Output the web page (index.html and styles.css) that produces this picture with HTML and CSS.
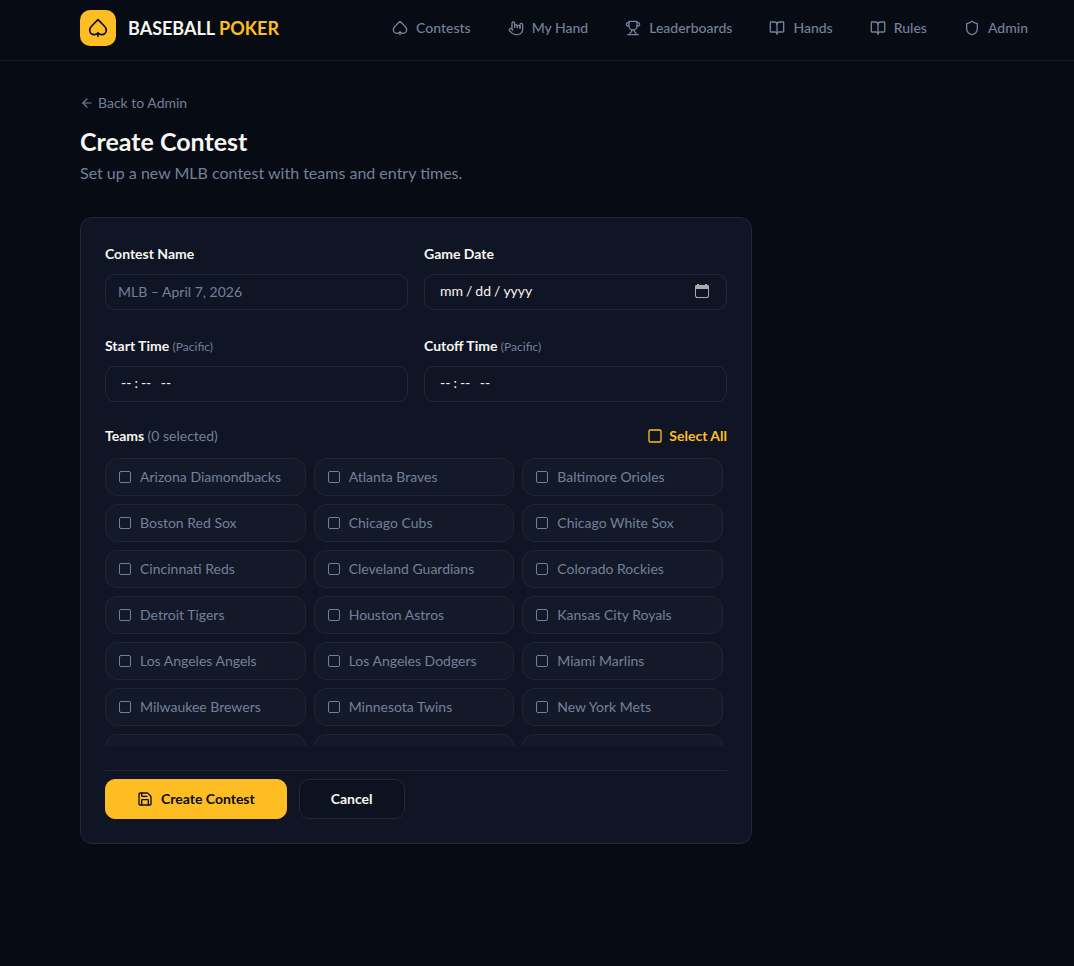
FILE: index.html
```html
<!DOCTYPE html>
<html lang="en">
<head>
    <meta charset="UTF-8">
    <meta name="viewport" content="width=device-width, initial-scale=1.0">
    <title>Create Contest - Baseball Poker</title>
    <link rel="stylesheet" href="styles.css">
</head>
<body>
    <header class="site-header">
        <a href="#" class="brand">
            <span class="brand-mark">
                <svg class="icon icon-lg" viewBox="0 0 24 24"><path d="M5 9c-1.5 1.5-3 3.2-3 5.5A5.5 5.5 0 0 0 7.5 20c1.8 0 3-.5 4.5-2 1.5 1.5 2.7 2 4.5 2a5.5 5.5 0 0 0 5.5-5.5c0-2.3-1.5-4-3-5.5l-7-7-7 7Z"/><path d="M12 18v4"/></svg>
            </span>
            <span class="brand-name">BASEBALL <span class="accent">POKER</span></span>
        </a>
        <nav class="main-nav">
            <a href="#contests">
                <svg class="icon" viewBox="0 0 24 24"><path d="M5 9c-1.5 1.5-3 3.2-3 5.5A5.5 5.5 0 0 0 7.5 20c1.8 0 3-.5 4.5-2 1.5 1.5 2.7 2 4.5 2a5.5 5.5 0 0 0 5.5-5.5c0-2.3-1.5-4-3-5.5l-7-7-7 7Z"/><path d="M12 18v4"/></svg>
                Contests
            </a>
            <a href="#my-hand">
                <svg class="icon" viewBox="0 0 24 24"><path d="M18 12.5V10a2 2 0 0 0-2-2a2 2 0 0 0-2 2v1.4"/><path d="M14 11V9a2 2 0 1 0-4 0v2"/><path d="M10 10.5V5a2 2 0 1 0-4 0v9"/><path d="m7 15-1.76-1.76a2 2 0 0 0-2.83 2.82l3.6 3.6C7.5 21.14 9.2 22 12 22h2a8 8 0 0 0 8-8V7a2 2 0 1 0-4 0v5"/></svg>
                My Hand
            </a>
            <a href="#leaderboards">
                <svg class="icon" viewBox="0 0 24 24"><path d="M6 9H4.5a2.5 2.5 0 0 1 0-5H6"/><path d="M18 9h1.5a2.5 2.5 0 0 0 0-5H18"/><path d="M4 22h16"/><path d="M10 14.66V17c0 .55-.47.98-.97 1.21C7.85 18.75 7 20.24 7 22"/><path d="M14 14.66V17c0 .55.47.98.97 1.21C16.15 18.75 17 20.24 17 22"/><path d="M18 2H6v7a6 6 0 0 0 12 0V2Z"/></svg>
                Leaderboards
            </a>
            <a href="#hands">
                <svg class="icon" viewBox="0 0 24 24"><path d="M12 7v14"/><path d="M3 18a1 1 0 0 1-1-1V4a1 1 0 0 1 1-1h5a4 4 0 0 1 4 4 4 4 0 0 1 4-4h5a1 1 0 0 1 1 1v13a1 1 0 0 1-1 1h-6a3 3 0 0 0-3 3 3 3 0 0 0-3-3z"/></svg>
                Hands
            </a>
            <a href="#rules">
                <svg class="icon" viewBox="0 0 24 24"><path d="M12 7v14"/><path d="M3 18a1 1 0 0 1-1-1V4a1 1 0 0 1 1-1h5a4 4 0 0 1 4 4 4 4 0 0 1 4-4h5a1 1 0 0 1 1 1v13a1 1 0 0 1-1 1h-6a3 3 0 0 0-3 3 3 3 0 0 0-3-3z"/></svg>
                Rules
            </a>
            <a href="#admin">
                <svg class="icon" viewBox="0 0 24 24"><path d="M20 13c0 5-3.5 7.5-7.66 8.95a1 1 0 0 1-.67-.01C7.5 20.5 4 18 4 13V6a1 1 0 0 1 1-1c2 0 4.5-1.2 6.24-2.72a1.17 1.17 0 0 1 1.52 0C14.51 3.81 17 5 19 5a1 1 0 0 1 1 1z"/></svg>
                Admin
            </a>
        </nav>
    </header>

    <main class="page">
        <a href="#admin" class="back-link">
            <svg class="icon icon-sm" viewBox="0 0 24 24"><path d="m12 19-7-7 7-7"/><path d="M19 12H5"/></svg>
            Back to Admin
        </a>
        <h1>Create Contest</h1>
        <p class="subtitle">Set up a new MLB contest with teams and entry times.</p>

        <form class="card">
            <div class="fields">
                <div class="field">
                    <label for="name">Contest Name</label>
                    <input type="text" id="name" placeholder="MLB – April 7, 2026">
                </div>
                <div class="field">
                    <label for="date">Game Date</label>
                    <input type="date" id="date">
                </div>
                <div class="field">
                    <label for="start">Start Time <small>(Pacific)</small></label>
                    <input type="time" id="start">
                </div>
                <div class="field">
                    <label for="cutoff">Cutoff Time <small>(Pacific)</small></label>
                    <input type="time" id="cutoff">
                </div>
            </div>

            <div class="teams-head">
                <h2>Teams <span>(0 selected)</span></h2>
                <button type="button" class="select-all">
                    <svg class="icon" viewBox="0 0 24 24"><rect x="3" y="3" width="18" height="18" rx="2"/></svg>
                    Select All
                </button>
            </div>
            <div class="teams">
                <label class="team"><input type="checkbox">Arizona Diamondbacks</label>
                <label class="team"><input type="checkbox">Atlanta Braves</label>
                <label class="team"><input type="checkbox">Baltimore Orioles</label>
                <label class="team"><input type="checkbox">Boston Red Sox</label>
                <label class="team"><input type="checkbox">Chicago Cubs</label>
                <label class="team"><input type="checkbox">Chicago White Sox</label>
                <label class="team"><input type="checkbox">Cincinnati Reds</label>
                <label class="team"><input type="checkbox">Cleveland Guardians</label>
                <label class="team"><input type="checkbox">Colorado Rockies</label>
                <label class="team"><input type="checkbox">Detroit Tigers</label>
                <label class="team"><input type="checkbox">Houston Astros</label>
                <label class="team"><input type="checkbox">Kansas City Royals</label>
                <label class="team"><input type="checkbox">Los Angeles Angels</label>
                <label class="team"><input type="checkbox">Los Angeles Dodgers</label>
                <label class="team"><input type="checkbox">Miami Marlins</label>
                <label class="team"><input type="checkbox">Milwaukee Brewers</label>
                <label class="team"><input type="checkbox">Minnesota Twins</label>
                <label class="team"><input type="checkbox">New York Mets</label>
                <label class="team"><input type="checkbox">New York Yankees</label>
                <label class="team"><input type="checkbox">Oakland Athletics</label>
                <label class="team"><input type="checkbox">Philadelphia Phillies</label>
            </div>

            <div class="actions">
                <button type="submit" class="btn btn-primary">
                    <svg class="icon" viewBox="0 0 24 24"><path d="M15.2 3a2 2 0 0 1 1.4.6l3.8 3.8a2 2 0 0 1 .6 1.4V19a2 2 0 0 1-2 2H5a2 2 0 0 1-2-2V5a2 2 0 0 1 2-2z"/><path d="M17 21v-7a1 1 0 0 0-1-1H8a1 1 0 0 0-1 1v7"/><path d="M7 3v4a1 1 0 0 0 1 1h7"/></svg>
                    Create Contest
                </button>
                <button type="button" class="btn">Cancel</button>
            </div>
        </form>
    </main>
</body>
</html>
```
FILE: styles.css
```css
* {
    box-sizing: border-box;
}
body {
    margin: 0;
    font-family: Lato, sans-serif;
    font-size: 14px;
    line-height: 20px;
    color: #f7f5f0;
    background-color: #070b14;
    color-scheme: dark;
}
a {
    color: inherit;
    text-decoration: none;
}
button, input {
    font: inherit;
    color: inherit;
}
button {
    cursor: pointer;
}
.icon {
    width: 16px;
    height: 16px;
    flex-shrink: 0;
    fill: none;
    stroke: currentColor;
    stroke-width: 2;
    stroke-linecap: round;
    stroke-linejoin: round;
}
.icon-sm {
    width: 14px;
    height: 14px;
}
.icon-lg {
    width: 20px;
    height: 20px;
}

/* Header */
.site-header {
    display: flex;
    align-items: center;
    justify-content: space-between;
    padding: 10px 46px 14px 80px;
    border-bottom: 1px solid #171c28;
}
.brand {
    display: flex;
    align-items: center;
    gap: 12px;
}
.brand-mark {
    display: flex;
    align-items: center;
    justify-content: center;
    width: 36px;
    height: 36px;
    border-radius: 10px;
    background-color: #fdbd23;
    color: #070b14;
}
.brand-name {
    font-size: 18px;
    font-weight: bold;
    white-space: nowrap;
}
.accent {
    color: #fdbd23;
}
.main-nav {
    display: flex;
    gap: 37px;
    color: #74809a;
    font-weight: 500;
    white-space: nowrap;
}
.main-nav a {
    display: flex;
    align-items: center;
    gap: 8px;
}
.main-nav a:hover, .back-link:hover {
    color: #f7f5f0;
}

/* Page */
.page {
    padding: 32px 80px;
}
.back-link {
    display: inline-flex;
    align-items: center;
    gap: 4px;
    color: #74809a;
}
h1 {
    margin: 10px 0 4px;
    font-size: 25px;
    line-height: 32px;
}
.subtitle {
    margin: 0 0 32px;
    font-size: 16px;
    line-height: 24px;
    color: #74809a;
}
.card {
    max-width: 672px;
    padding: 24px;
    border: 1px solid #222836;
    border-radius: 12px;
    background-color: #0f1524;
}
.fields {
    display: grid;
    grid-template-columns: 1fr 1fr;
    gap: 24px 16px;
    margin-bottom: 24px;
}
.field label {
    display: block;
    margin-bottom: 8px;
    line-height: 24px;
    font-weight: bold;
}
.field small {
    font-size: 12px;
    line-height: 16px;
    font-weight: normal;
    color: #74809a;
}
.field input {
    display: block;
    width: 100%;
    height: 36px;
    padding: 4px 12px 6px;
    border: 1px solid #222836;
    border-radius: 10px;
    background-color: transparent;
}
.field input::placeholder {
    color: #74809a;
    opacity: 1;
}
.field input::-webkit-datetime-edit {
    padding-left: 2px;
}
.field input::-webkit-datetime-edit-text {
    padding: 0 2px;
}
.field input[type="date"]::-webkit-calendar-picker-indicator {
    width: 16px;
    height: 16px;
    padding: 0;
    margin-right: 4px;
    background: url("data:image/svg+xml,%3Csvg xmlns='http://www.w3.org/2000/svg' viewBox='0 0 16 16'%3E%3Cpath fill='%23aaa' fill-rule='evenodd' d='M3 1h2v1h6V1h2v1h1l1 1v10l-1 2H2l-1-2V3l1-1h1zM2 6v7l1 1h10l1-1V6z'/%3E%3C/svg%3E") center / 16px no-repeat;
}
.field input[type="time"]::-webkit-calendar-picker-indicator {
    display: none;
}

/* Teams */
.teams-head {
    display: flex;
    align-items: center;
    justify-content: space-between;
    margin-bottom: 12px;
}
.teams-head h2 {
    margin: 0;
    font-size: 14px;
    line-height: 20px;
}
.teams-head span {
    font-weight: normal;
    color: #74809a;
}
.select-all {
    display: flex;
    align-items: center;
    gap: 6px;
    padding: 0;
    border: none;
    background: none;
    color: #fdbd23;
    font-weight: bold;
}
.teams {
    display: grid;
    grid-template-columns: repeat(3, 1fr);
    gap: 8px;
    max-height: 288px;
    padding-right: 4px;
    overflow-y: auto;
    scrollbar-width: none;
}
.team {
    display: flex;
    align-items: center;
    gap: 9px;
    height: 38px;
    padding: 0 13px;
    border: 1px solid #1f2533;
    border-radius: 12px;
    background-color: #131928;
    color: #74809a;
}
.team input {
    appearance: none;
    width: 12px;
    height: 12px;
    margin: 0;
    border: 1px solid #74809a;
    border-radius: 2px;
}
.team input:checked {
    background-color: #fdbd23;
    border-color: #fdbd23;
}

/* Actions */
.actions {
    display: flex;
    gap: 12px;
    margin-top: 24px;
    padding-top: 8px;
    border-top: 1px solid #222836;
}
.btn {
    display: flex;
    align-items: center;
    justify-content: center;
    gap: 8px;
    height: 40px;
    padding: 0 31px;
    border: 1px solid #222836;
    border-radius: 10px;
    background-color: #0d1220;
    font-weight: bold;
}
.btn-primary {
    border-color: #fdbd23;
    background-color: #fdbd23;
    color: #070b14;
}
```
